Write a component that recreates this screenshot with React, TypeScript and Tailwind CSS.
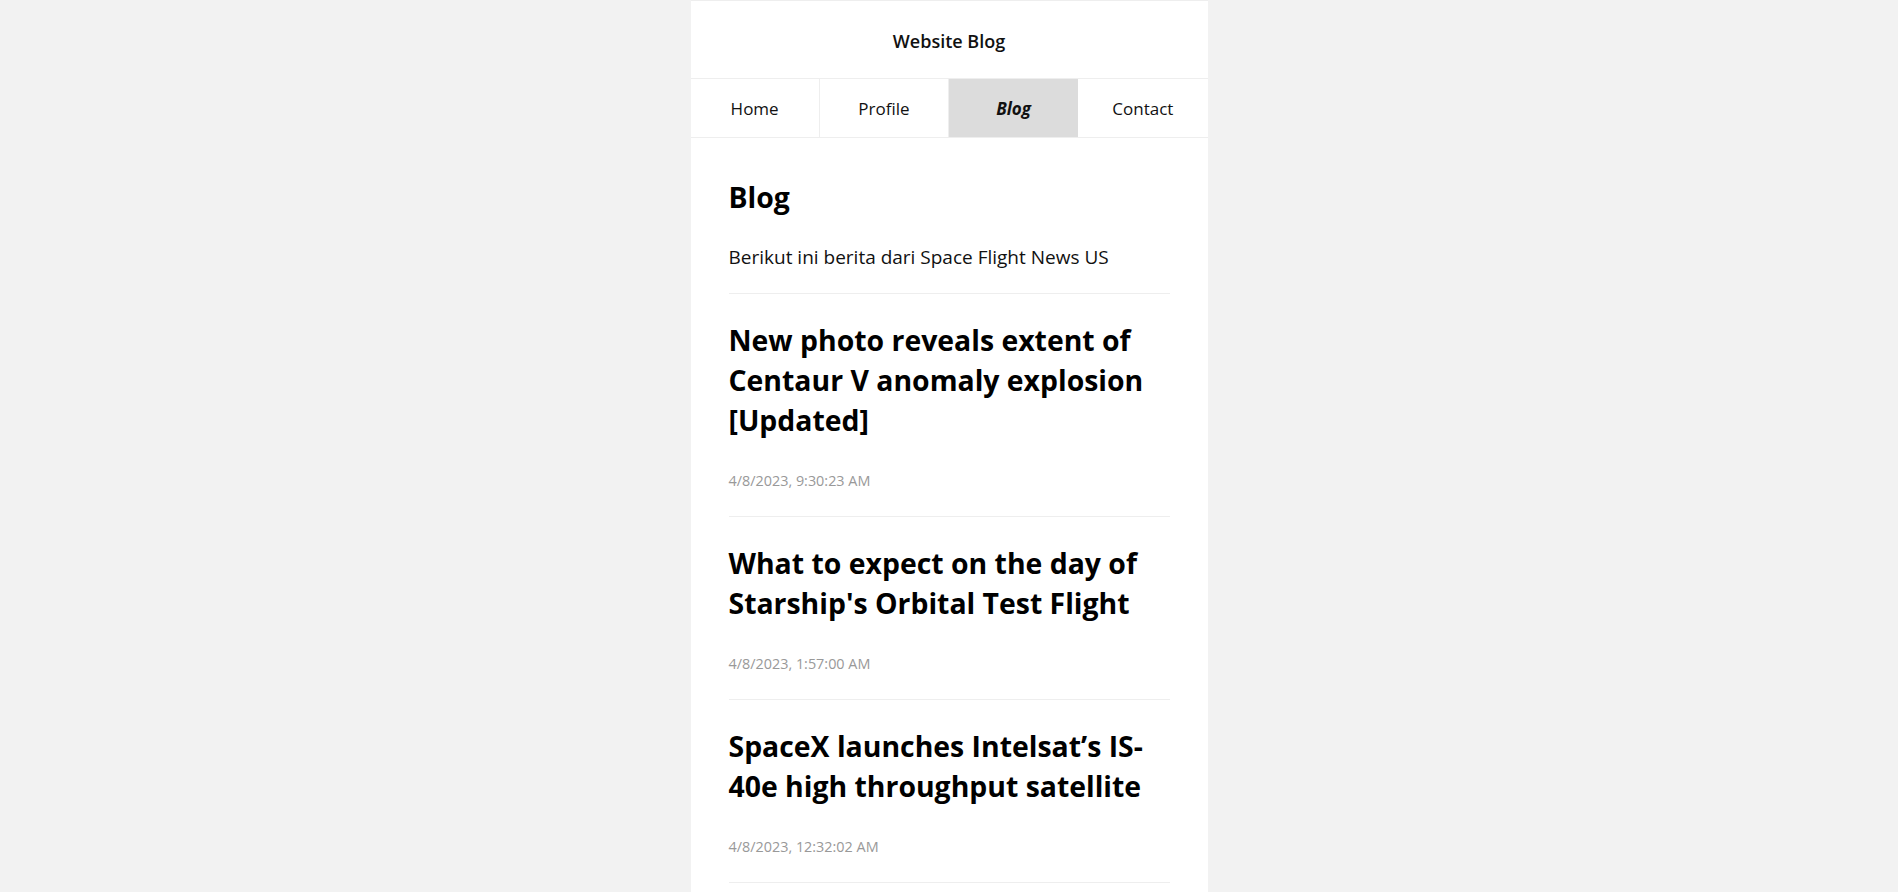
import React from "react";

type Post = {
  id: number;
  title: string;
  publishedAt: string;
};

const posts: Post[] = [
  {
    id: 1,
    title: "New photo reveals extent of Centaur V anomaly explosion [Updated]",
    publishedAt: "4/8/2023, 9:30:23 AM",
  },
  {
    id: 2,
    title: "What to expect on the day of Starship's Orbital Test Flight",
    publishedAt: "4/8/2023, 1:57:00 AM",
  },
  {
    id: 3,
    title: "SpaceX launches Intelsat’s IS-40e high throughput satellite",
    publishedAt: "4/8/2023, 12:32:02 AM",
  },
];

const tabs = ["Home", "Profile", "Blog", "Contact"];

function NavBar({ active }: { active: string }) {
  return (
    <nav className="grid grid-cols-4 h-[59px] border-b border-[#eeeeee]">
      {tabs.map((tab, i) => (
        <div
          key={tab}
          className={`flex items-center justify-center pt-[2px] text-[17px] text-[#111]
            ${i < 2 ? "border-r border-[#eeeeee]" : ""}
            ${tab === active ? "bg-[#dcdcdc] font-bold italic" : ""}`}
        >
          {tab}
        </div>
      ))}
    </nav>
  );
}

function PostItem({ post }: { post: Post }) {
  return (
    <article className="pt-[26px] pb-[25px] border-b border-[#eeeeee]">
      <h2 className="text-[28.4px] leading-[40px] font-bold text-black">
        {post.title}
      </h2>
      <p className="mt-[31px] text-[14.4px] leading-[20px] text-[#999999]">
        {post.publishedAt}
      </p>
    </article>
  );
}

export default function App() {
  return (
    <div
      className="min-h-screen bg-[#f2f2f2]"
      style={{ fontFamily: '"Open Sans", "Noto Sans", sans-serif' }}
    >
      <div className="mx-auto w-[517px] min-h-screen bg-white">
        <header className="h-[79px] pt-[3px] border-y border-[#eeeeee] flex items-center justify-center">
          <h1 className="text-[18px] font-semibold text-[#111]">Website Blog</h1>
        </header>

        <NavBar active="Blog" />

        <main className="px-[38px]">
          <div className="pt-[39px] pb-[22px] border-b border-[#eeeeee]">
            <h2 className="text-[28.4px] leading-[40px] font-bold text-black">Blog</h2>
            <p className="mt-[27px] text-[19px] leading-[27px] text-[#111]">
              Berikut ini berita dari Space Flight News US
            </p>
          </div>

          {posts.map((post) => (
            <PostItem key={post.id} post={post} />
          ))}
        </main>
      </div>
    </div>
  );
}
